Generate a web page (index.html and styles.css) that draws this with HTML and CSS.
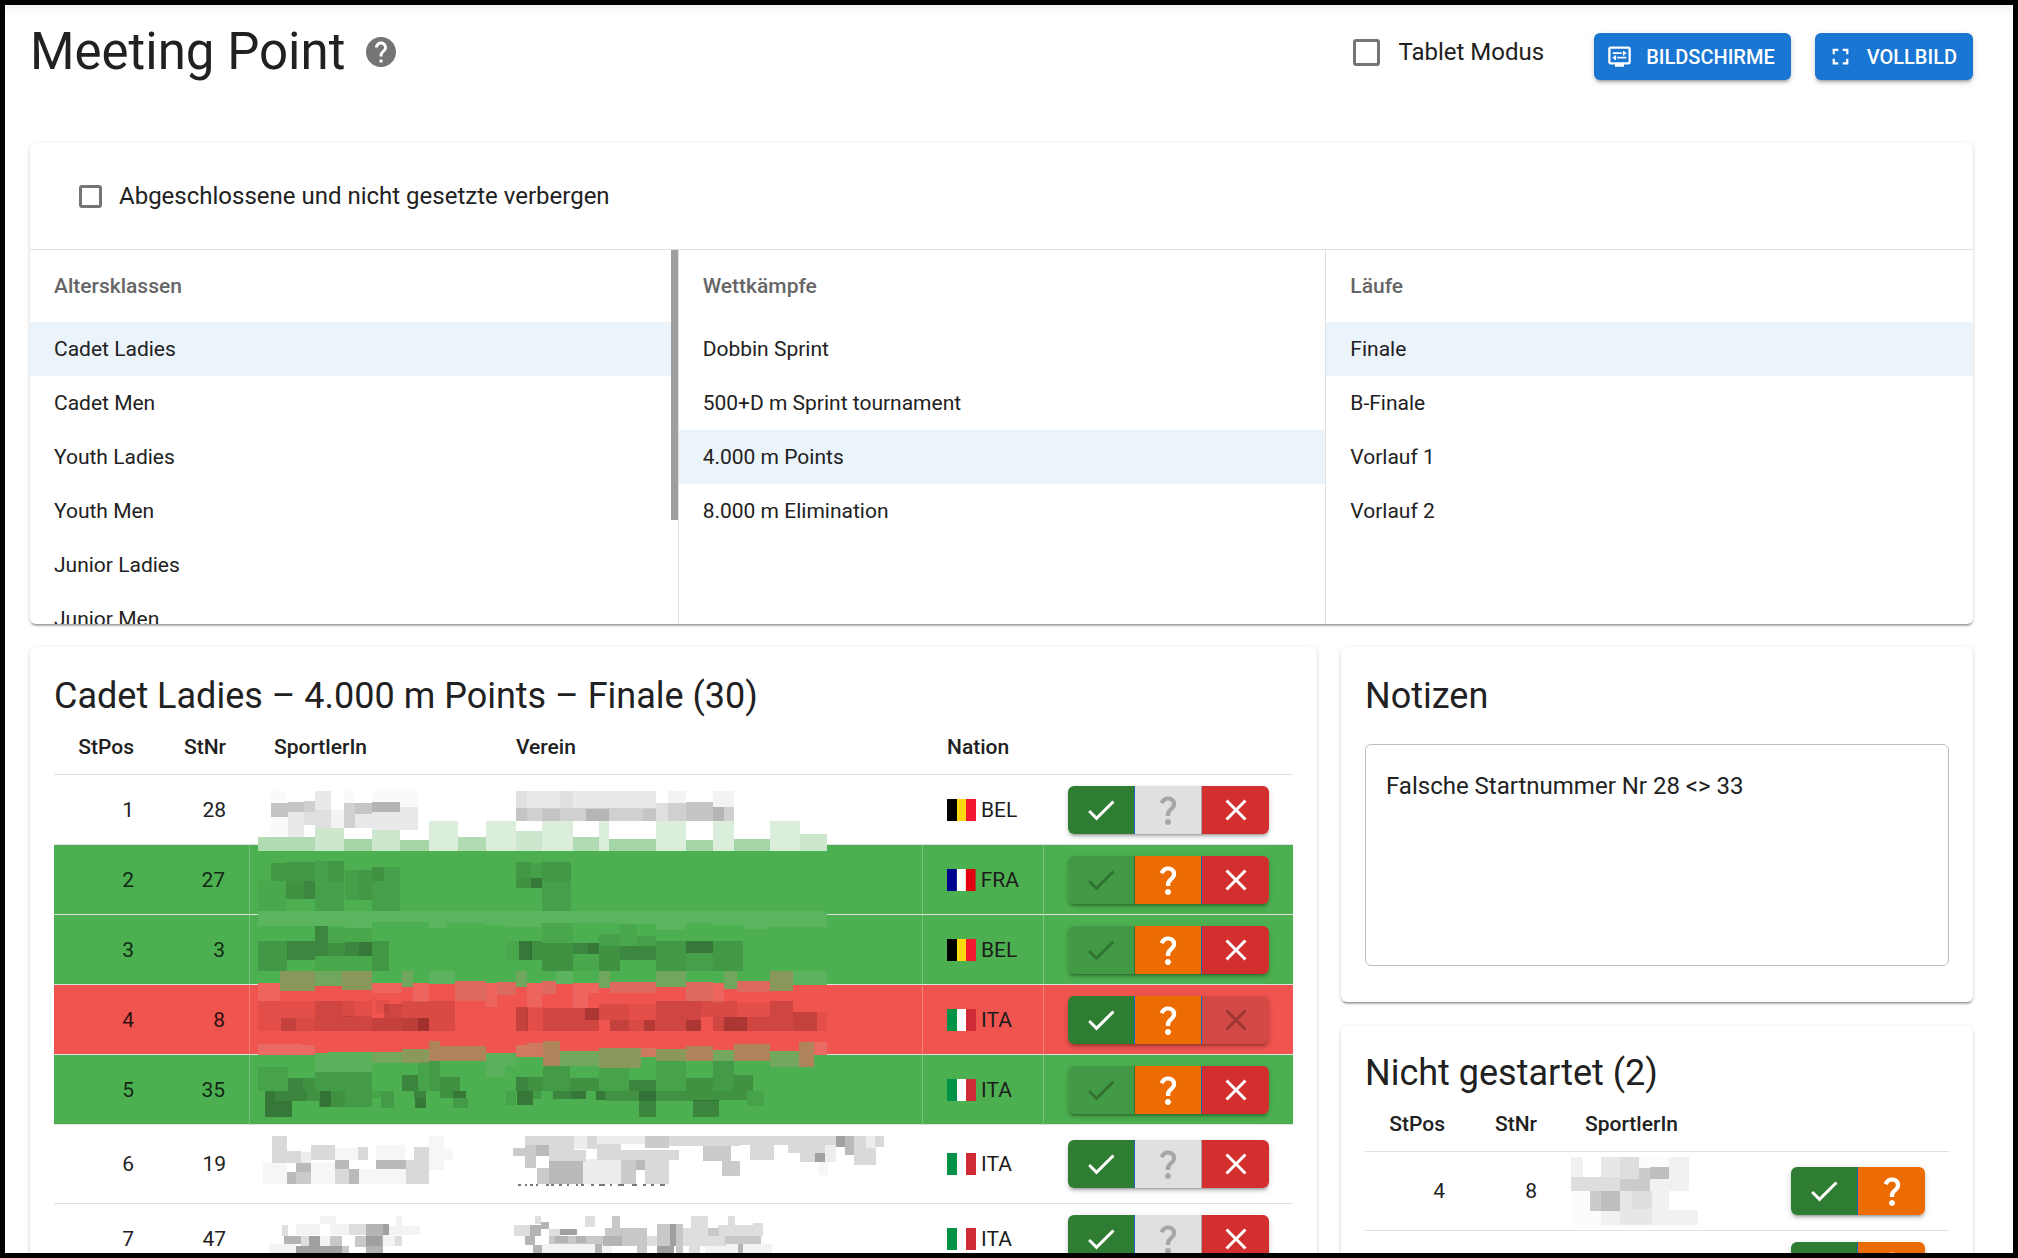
FILE: index.html
```html
<!DOCTYPE html>
<html lang="de">
<head>
<meta charset="utf-8">
<title>Meeting Point</title>
<link rel="stylesheet" href="styles.css">
</head>
<body>
<svg class="sprite" aria-hidden="true">
  <symbol id="i-check" viewBox="0 0 24 24"><path d="M9 16.17 4.83 12l-1.42 1.41L9 19 21 7l-1.41-1.41z"/></symbol>
  <symbol id="i-close" viewBox="0 0 24 24"><path d="M19 6.41 17.59 5 12 10.59 6.41 5 5 6.41 10.59 12 5 17.59 6.41 19 12 13.41 17.59 19 19 17.59 13.41 12z"/></symbol>
  <symbol id="i-ask" viewBox="0 0 24 24"><path d="M11.07 12.85c.77-1.39 2.25-2.21 3.11-3.44.91-1.29.4-3.7-2.18-3.7-1.69 0-2.52 1.28-2.87 2.34L6.54 6.96C7.25 4.83 9.18 3 11.99 3c2.35 0 3.96 1.07 4.78 2.41.7 1.15 1.11 3.3.03 4.9-1.2 1.77-2.35 2.31-2.97 3.45-.25.46-.35.76-.35 2.24h-2.89c-.01-.78-.13-2.05.48-3.15zM14 20c0 1.1-.9 2-2 2s-2-.9-2-2 .9-2 2-2 2 .9 2 2z"/></symbol>
  <symbol id="f-bel" viewBox="0 0 29 22"><path fill="#000" d="M0 0h10v22H0z"/><path fill="#ffd90c" d="M10 0h10v22H10z"/><path fill="#f31830" d="M19 0h10v22H19z"/></symbol>
  <symbol id="f-fra" viewBox="0 0 29 22"><path fill="#00008f" d="M0 0h10v22H0z"/><path fill="#fff" d="M10 0h10v22H10z"/><path fill="#e1000f" d="M19 0h10v22H19z"/></symbol>
  <symbol id="f-ita" viewBox="0 0 29 22"><path fill="#009246" d="M0 0h10v22H0z"/><path fill="#fff" d="M10 0h10v22H10z"/><path fill="#ce2b37" d="M19 0h10v22H19z"/></symbol>
</svg>
<div class="frame">
<main class="page">
  <header class="head">
    <h1 class="title">Meeting Point</h1>
    <svg class="help" viewBox="0 0 24 24" aria-hidden="true"><path d="M12 2C6.48 2 2 6.48 2 12s4.48 10 10 10 10-4.480 10-10S17.520 2 12 2zm1 17h-2v-2h2v2zm2.070-7.750-.9.920C13.450 12.900 13 13.500 13 15h-2v-.5c0-1.100.450-2.100 1.170-2.830l1.240-1.260c.370-.36.590-.86.590-1.410 0-1.100-.9-2-2-2s-2 .9-2 2H8c0-2.210 1.790-4 4-4s4 1.790 4 4c0 .88-.36 1.680-.93 2.250z"/></svg>
    <label class="check check-lg"><input type="checkbox"><span>Tablet Modus</span></label>
    <div class="tools">
      <button class="btn" type="button"><svg viewBox="0 0 24 24"><path d="M20 3H4c-1.110 0-2 .89-2 2v12c0 1.100.89 2 2 2h4v2h8v-2h4c1.100 0 2-.9 2-2V5c0-1.110-.9-2-2-2zm0 14H4V5h16v12z"/><path d="M6 8.250h8v1.500H6zM16.500 9.750H18v-1.500h-1.500V7H15v4h1.500zM10 12.250h8v1.500h-8zM7.500 15H9v-4H7.500v1.250H6v1.500h1.500z"/></svg>BILDSCHIRME</button>
      <button class="btn" type="button"><svg viewBox="0 0 24 24"><path d="M7 14H5v5h5v-2H7v-3zm-2-4h2V7h3V5H5v5zm12 7h-3v2h5v-5h-2v3zM14 5v2h3v3h2V5h-5z"/></svg>VOLLBILD</button>
    </div>
  </header>

  <section class="card picker">
    <div class="filter"><label class="check"><input type="checkbox"><span>Abgeschlossene und nicht gesetzte verbergen</span></label></div>
    <div class="lists">
      <div class="list">
        <h2 class="list-head">Altersklassen</h2>
        <ul>
          <li class="on">Cadet Ladies</li><li>Cadet Men</li><li>Youth Ladies</li><li>Youth Men</li><li>Junior Ladies</li><li>Junior Men</li>
        </ul>
        <span class="thumb"></span>
      </div>
      <div class="list">
        <h2 class="list-head">Wettkämpfe</h2>
        <ul><li>Dobbin Sprint</li><li>500+D m Sprint tournament</li><li class="on">4.000 m Points</li><li>8.000 m Elimination</li></ul>
      </div>
      <div class="list">
        <h2 class="list-head">Läufe</h2>
        <ul><li class="on">Finale</li><li>B-Finale</li><li>Vorlauf 1</li><li>Vorlauf 2</li></ul>
      </div>
    </div>
  </section>

  <div class="columns">
    <section class="card heat">
      <h2 class="card-title">Cadet Ladies – 4.000 m Points – Finale (30)</h2>
      <div class="table-wrap">
      <table>
        <colgroup><col class="c-pos"><col class="c-nr"><col class="c-name"><col><col class="c-nat"><col class="c-act3"></colgroup>
        <thead><tr><th class="num">StPos</th><th class="num">StNr</th><th>SportlerIn</th><th>Verein</th><th>Nation</th><th></th></tr></thead>
        <tbody>
          <tr><td class="num">1</td><td class="num">28</td><td></td><td></td><td><span class="nat"><svg><use href="#f-bel"/></svg>BEL</span></td><td><div class="group"><button class="ok" aria-label="Da"><svg><use href="#i-check"/></svg></button><button class="ask" aria-label="Offen" disabled><svg><use href="#i-ask"/></svg></button><button class="no" aria-label="Fehlt"><svg><use href="#i-close"/></svg></button></div></td></tr>
          <tr class="present"><td class="num">2</td><td class="num">27</td><td></td><td></td><td><span class="nat"><svg><use href="#f-fra"/></svg>FRA</span></td><td><div class="group"><button class="ok" aria-label="Da" disabled><svg><use href="#i-check"/></svg></button><button class="ask" aria-label="Offen"><svg><use href="#i-ask"/></svg></button><button class="no" aria-label="Fehlt"><svg><use href="#i-close"/></svg></button></div></td></tr>
          <tr class="present"><td class="num">3</td><td class="num">3</td><td></td><td></td><td><span class="nat"><svg><use href="#f-bel"/></svg>BEL</span></td><td><div class="group"><button class="ok" aria-label="Da" disabled><svg><use href="#i-check"/></svg></button><button class="ask" aria-label="Offen"><svg><use href="#i-ask"/></svg></button><button class="no" aria-label="Fehlt"><svg><use href="#i-close"/></svg></button></div></td></tr>
          <tr class="missing"><td class="num">4</td><td class="num">8</td><td></td><td></td><td><span class="nat"><svg><use href="#f-ita"/></svg>ITA</span></td><td><div class="group"><button class="ok" aria-label="Da"><svg><use href="#i-check"/></svg></button><button class="ask" aria-label="Offen"><svg><use href="#i-ask"/></svg></button><button class="no" aria-label="Fehlt" disabled><svg><use href="#i-close"/></svg></button></div></td></tr>
          <tr class="present"><td class="num">5</td><td class="num">35</td><td></td><td></td><td><span class="nat"><svg><use href="#f-ita"/></svg>ITA</span></td><td><div class="group"><button class="ok" aria-label="Da" disabled><svg><use href="#i-check"/></svg></button><button class="ask" aria-label="Offen"><svg><use href="#i-ask"/></svg></button><button class="no" aria-label="Fehlt"><svg><use href="#i-close"/></svg></button></div></td></tr>
          <tr class="tall"><td class="num">6</td><td class="num">19</td><td></td><td></td><td><span class="nat"><svg><use href="#f-ita"/></svg>ITA</span></td><td><div class="group"><button class="ok" aria-label="Da"><svg><use href="#i-check"/></svg></button><button class="ask" aria-label="Offen" disabled><svg><use href="#i-ask"/></svg></button><button class="no" aria-label="Fehlt"><svg><use href="#i-close"/></svg></button></div></td></tr>
          <tr><td class="num">7</td><td class="num">47</td><td></td><td></td><td><span class="nat"><svg><use href="#f-ita"/></svg>ITA</span></td><td><div class="group"><button class="ok" aria-label="Da"><svg><use href="#i-check"/></svg></button><button class="ask" aria-label="Offen" disabled><svg><use href="#i-ask"/></svg></button><button class="no" aria-label="Fehlt"><svg><use href="#i-close"/></svg></button></div></td></tr>
        </tbody>
      </table>
      <!-- names and clubs are pixelated; the blocks run across row borders -->
      <svg class="mosaic" viewBox="0 0 660 488" shape-rendering="crispEdges" aria-hidden="true">
        <svg width="640" height="250" viewBox="0 0 1568 750" preserveAspectRatio="none">
          <path fill="#fafafa" d="M75 63h41v36h-41zM75 141h43v60h-43zM254 63h28v36h-28zM323 63h113v48h-113z"/>
          <path fill="#f3f3f3" d="M224 120h30v54h-30zM1049 63h43v36h-43zM1158 63h52v48h-52z"/>
          <path fill="#e9e9e9" d="M118 126h38v75h-38zM183 63h41v57h-41zM282 132h41v42h-41zM323 126h68v54h-68zM391 111h45v69h-45zM703 63h315v54h-315z"/>
          <path fill="#e0e0e0" d="M675 63h28v51h-28zM785 63h30v54h-30zM156 126h27v39h-27zM183 120h41v54h-41zM1018 99h31v54h-31z"/>
          <path fill="#d0d0d0" d="M156 93h27v33h-27zM254 99h28v75h-28zM703 114h315v39h-315zM1049 99h43v54h-43zM1186 111h24v42h-24z"/>
          <path fill="#c5c5c5" d="M75 99h43v42h-43zM118 96h38v30h-38zM282 99h41v33h-41zM675 114h28v39h-28zM741 117h44v36h-44zM987 117h31v36h-31zM1092 96h66v57h-66z"/>
          <path fill="#b5b5b5" d="M323 96h68v30h-68zM848 117h56v36h-56zM1158 111h28v42h-28z"/>
          <path fill="#4db050" d="M43 225h1395v208H43zM43 423h1395v217H43z"/>
          <path fill="#b1dbb3" d="M43 201h140v42h-140zM533 201h70v42h-70zM815 201h65v42h-65z"/>
          <path fill="#a4d5a6" d="M254 207h69v36h-69zM391 210h72v33h-72zM904 207h114v36h-114zM1092 210h66v33h-66zM1210 207h88v36h-88z"/>
          <path fill="#dbeedc" d="M463 153h70v90h-70zM603 153h72v90h-72zM741 153h74v90h-74zM880 153h24v90h-24zM1018 153h74v90h-74zM1158 153h52v90h-52zM1298 153h74v90h-74z"/>
          <path fill="#cce7cd" d="M183 174h71v69h-71zM323 180h68v63h-68zM675 183h66v60h-66zM1372 192h66v51h-66z"/>
          <path fill="#5bb55f" d="M43 423h214v45h-214zM257 423h66v51h-66zM323 423h140v33h-140zM463 423h43v51h-43zM506 423h97v36h-97zM603 423h49v42h-49zM652 423h89v48h-89zM741 423h190v36h-190zM931 423h87v39h-87zM1018 423h74v57h-74zM1092 423h66v36h-66zM1158 423h74v42h-74zM1232 423h66v54h-66zM1298 423h140v48h-140z"/>
          <g fill="#234b25">
            <path opacity=".08" d="M43 333h70v90h-70zM741 459h74v60h-74zM183 558h140v45h-140zM652 514h32v57h-32zM815 552h65v51h-65zM215 474h42v45h-42zM257 474h66v42h-66zM931 462h42v66h-42z"/>
            <path opacity=".16" d="M183 273h32v60h-32zM183 333h73v90h-73zM257 300h35v90h-35zM323 333h70v90h-70zM354 291h39v42h-39zM712 279h29v45h-29zM741 333h71v90h-71zM880 492h51v36h-51zM973 499h45v30h-45zM1092 549h67v54h-67z"/>
            <path opacity=".23" d="M75 279h38v54h-38zM113 276h70v57h-70zM215 273h41v60h-41zM292 300h31v90h-31zM675 276h37v48h-37zM741 276h71v57h-71zM43 514h71v89h-71zM323 514h41v89h-41zM1018 514h74v89h-74zM1159 514h73v89h-73z"/>
            <path opacity=".3" d="M113 333h43v54h-43zM323 291h31v42h-31zM675 324h37v30h-37zM215 519h42v39h-42zM712 514h29v57h-29zM741 519h74v84h-74zM880 528h51v75h-51z"/>
            <path opacity=".4" d="M156 333h27v54h-27zM183 468h32v90h-32zM114 514h69v57h-69zM257 516h35v42h-35zM815 519h37v33h-37zM931 528h87v42h-87z"/>
            <path opacity=".55" d="M712 324h29v30h-29zM292 516h31v42h-31zM684 514h31v57h-31zM852 519h28v33h-28zM1092 514h67v35h-67z"/>
          </g>
          <path fill="#f0544f" d="M43 640h1395v80h-1395z"/>
          <path fill="#8a975a" d="M99 603h84v60h-84zM249 603h74v57h-74zM1298 603h57v60h-57z"/>
          <path fill="#70a65d" d="M183 603h66v45h-66zM397 603h28v48h-28zM675 603h28v48h-28zM880 603h26v51h-26zM1018 603h74v48h-74zM1186 603h31v54h-31z"/>
          <path fill="#5bb360" d="M463 603h63v39h-63zM774 603h41v39h-41zM1355 603h83v42h-83z"/>
          <path fill="#ee655f" d="M43 640h56v54h-56zM323 640h74v29h-74zM425 640h38v56h-38zM603 640h26v71h-26zM703 640h38v71h-38zM815 640h37v74h-37zM852 640h28v29h-28zM1159 640h27v59h-27z"/>
          <path fill="#dd6a5e" d="M526 634h77v60h-77zM629 636h46v39h-46zM741 634h33v38h-33zM906 636h112v33h-112zM1092 636h67v58h-67zM1217 634h81v32h-81z"/>
        </svg>
        <svg y="230" width="660" height="258" viewBox="0 0 1568 774" preserveAspectRatio="none">
          <g fill="#551111">
            <path opacity=".08" d="M43 4h54v90h-54zM97 4h80v51h-80zM274 4h39v45h-39zM323-18h31v58h-31zM682 24h37v70h-37zM1180 10h79v42h-79zM1370 36h24v58h-24zM925 13h64v48h-64z"/>
            <path opacity=".14" d="M242 4h32v46h-32zM385 4h125v90h-125zM853 13h72v46h-72zM1095 4h85v48h-85zM133 55h44v39h-44zM925 61h64v33h-64z"/>
            <path opacity=".22" d="M177 4h65v90h-65zM341 13h44v42h-44zM719 24h134v70h-134zM989 4h106v90h-106zM1259 4h54v90h-54zM1124 52h135v42h-135zM242 49h71v45h-71zM385 55h63v39h-63z"/>
            <path opacity=".28" d="M97 55h35v39h-35zM313 55h72v39h-72zM424 55h24v39h-24zM656 22h28v72h-28zM820 24h33v35h-33zM879 59h44v35h-44zM960 61h27v33h-27zM1060 61h35v33h-35zM1150 52h54v42h-54zM1313 37h57v57h-57z"/>
          </g>
          <path fill="#4db050" d="M43 159h1352v16h-1352z"/>
          <path fill="#e96a63" d="M43 133h102v32h-102zM145 136h32v29h-32zM1363 127h32v38h-32z"/>
          <path fill="#cd7a60" d="M656 136h25v35h-25zM681 130h38v41h-38zM953 143h35v28h-35z"/>
          <path fill="#5bb05b" d="M177 160h31v55h-31zM208 156h105v60h-105zM584 159h46v71h-46zM630 159h25v40h-25z"/>
          <path fill="#74a75e" d="M313 156h72v33h-72zM760 153h93v45h-93zM1124 150h50v33h-50zM1259 153h70v48h-70z"/>
          <path fill="#8a985b" d="M385 148h64v41h-64zM853 144h100v60h-100zM988 148h72v35h-72z"/>
          <path fill="#af845a" d="M449 124h25v59h-25zM474 138h110v45h-110zM719 124h41v74h-41zM1060 138h64v45h-64zM1174 133h85v50h-85zM1329 127h34v74h-34z"/>
          <g fill="#234b25">
            <path opacity=".12" d="M43 201h70v73h-70zM424 187h25v87h-25zM313 274h22v20h-22zM631 274h25v42h-25zM1204 274h40v44h-40zM988 183h72v91h-72zM853 204h72v70h-72z"/>
            <path opacity=".2" d="M177 216h136v58h-136zM449 183h25v91h-25zM335 274h32v50h-32zM250 274h63v48h-63zM719 198h66v76h-66zM1124 183h50v91h-50zM506 294h36v31h-36zM696 274h20v24h-20z"/>
            <path opacity=".3" d="M150 235h27v39h-27zM158 274h92v30h-92zM188 304h62v18h-62zM474 231h48v43h-48zM474 274h32v20h-32zM684 231h35v43h-35zM785 235h68v39h-68zM866 274h274v28h-274zM1060 235h64v39h-64zM1174 225h45v49h-45zM1140 274h64v26h-64z"/>
            <path opacity=".42" d="M113 235h37v39h-37zM83 274h75v30h-75zM189 274h28v47h-28zM385 225h39v49h-39zM413 274h28v20h-28zM656 231h28v43h-28zM924 241h64v33h-64zM949 274h39v78h-39zM1076 300h63v52h-63zM743 274h43v24h-43z"/>
            <path opacity=".55" d="M59 274h24v78h-24zM83 304h40v48h-40zM416 294h25v31h-25zM506 274h30v21h-30zM659 274h37v42h-37zM786 274h35v24h-35zM846 274h20v26h-20z"/>
          </g>
          <path fill="#f6f6f6" d="M54 490h57v62h-57zM225 445h56v36h-56zM323 436h70v45h-70zM168 490h57v62h-57zM281 508h113v44h-113zM450 409h34v102h-34zM484 448h23v32h-23zM1376 487h20v39h-20z"/>
          <path fill="#ededed" d="M794 409h30v38h-30zM848 409h114v24h-114zM146 457h22v33h-22zM815 476h90v76h-90zM1487 409h22v35h-22zM1391 436h24v51h-24z"/>
          <path fill="#d9d9d9" d="M77 409h34v80h-34zM111 454h35v36h-35zM168 436h57v45h-57zM281 442h22v38h-22zM225 508h35v44h-35zM413 442h37v110h-37zM394 481h56v71h-56zM677 409h117v40h-117zM735 449h88v36h-88zM824 409h24v38h-24zM848 433h57v47h-57zM905 450h137v30h-137zM962 480h57v72h-57zM1019 409h170v30h-170zM1189 409h226v26h-226zM1212 435h57v45h-57zM1302 435h89v25h-89zM1330 460h61v26h-61zM1459 409h28v86h-28zM1487 444h23v51h-23zM1509 409h21v32h-21z"/>
          <path fill="#cbcbcb" d="M134 515h34v37h-34zM649 444h28v24h-28zM677 436h26v69h-26zM706 505h30v47h-30zM905 480h35v72h-35zM962 409h57v35h-57zM1100 439h66v44h-66zM1146 483h43v46h-43z"/>
          <path fill="#bababa" d="M111 517h23v35h-23zM134 490h34v25h-34zM225 481h35v27h-35zM260 508h22v44h-22zM323 481h71v27h-71zM703 436h32v32h-32zM735 484h80v68h-80zM940 480h22v30h-22zM1437 409h22v56h-22z"/>
          <path fill="#a2a2a2" d="M1366 459h24v28h-24zM1415 409h22v32h-22z"/>
          <path fill="#777" d="M660 552h7v5h-7zM676 552h6v5h-6zM690 552h6v5h-6zM703 552h6v5h-6zM728 552h6v5h-6zM739 552h6v5h-6zM759 552h6v5h-6zM776 552h6v5h-6zM798 552h6v5h-6zM811 552h6v5h-6zM835 552h6v5h-6zM853 552h13v5h-13zM879 552h5v5h-5zM899 552h13v5h-13zM931 552h12v5h-12zM958 552h6v5h-6zM977 552h6v5h-6zM997 552h13v5h-13z"/>
          <path fill="#f3f3f3" d="M68 733h65v41h-65zM191 649h38v22h-38zM133 671h58v34h-58zM215 671h84v34h-84zM355 679h73v26h-73zM371 649h13v30h-13zM189 707h26v32h-26zM340 705h28v34h-28zM717 731h126v43h-126zM859 731h25v43h-25zM1105 731h158v43h-158z"/>
          <path fill="#dedede" d="M99 675h16v32h-16zM146 707h19v32h-19zM368 707h16v32h-16zM651 675h38v32h-38zM701 649h15v22h-15zM820 649h23v33h-23zM733 688h27v19h-27zM1071 649h42v36h-42zM1159 649h18v26h-18zM1136 675h82v32h-82zM1218 668h24v39h-24zM1052 685h62v54h-62zM1070 707h85v32h-85zM1067 739h25v35h-25zM967 707h24v32h-24zM259 671h40v34h-40z"/>
          <path fill="#c8c8c8" d="M215 707h27v32h-27zM242 739h17v35h-17zM273 707h26v33h-26zM884 649h19v37h-19zM866 683h101v56h-101zM822 707h44v24h-44zM733 707h89v24h-89zM991 671h30v68h-30zM1036 671h16v90h-16zM1113 685h24v22h-24zM1152 707h67v25h-67zM943 739h24v20h-24zM1219 707h18v25h-18z"/>
          <path fill="#b4b4b4" d="M105 707h41v26h-41zM299 673h41v86h-41zM689 675h27v32h-27zM716 667h17v20h-17zM677 707h24v29h-24zM696 736h21v38h-21zM748 707h32v22h-32zM798 707h24v22h-24zM862 707h45v30h-45zM843 731h17v43h-17zM1183 732h13v42h-13z"/>
          <path fill="#a0a0a0" d="M133 739h109v35h-109zM165 707h24v32h-24zM340 673h15v32h-15zM299 707h38v32h-38zM760 688h40v18h-40zM1021 671h15v68h-15zM991 737h39v37h-39z"/>
        </svg>
      </svg>
      </div>
    </section>

    <div class="side">
      <section class="card notes">
        <h2 class="card-title"><label for="notes">Notizen</label></h2>
        <textarea id="notes">Falsche Startnummer Nr 28 &lt;&gt; 33</textarea>
      </section>
      <section class="card absent">
        <h2 class="card-title">Nicht gestartet (2)</h2>
        <table>
          <colgroup><col class="c-pos"><col class="c-nr"><col><col class="c-act2"></colgroup>
          <thead><tr><th class="num">StPos</th><th class="num">StNr</th><th>SportlerIn</th><th></th></tr></thead>
          <tbody>
            <tr class="tall"><td class="num">4</td><td class="num">8</td><td class="blur"><svg viewBox="0 0 284 204" preserveAspectRatio="none" shape-rendering="crispEdges" aria-hidden="true"><path fill="#fcfcfc" d="M0 101h67v103H0zM152 0h67v34h-67z"/><path fill="#f1f1f1" d="M0 0h27v60H0zM219 0h45v101h-45zM177 65h42v36h-42zM67 155h43v49H67zM182 101h37v58h-37zM182 159h102v45H182z"/><path fill="#e7e7e7" d="M67 0h42v60H67zM110 101h30v103h-30zM140 155h42v49h-42z"/><path fill="#dedede" d="M110 0h42v65h-42zM0 60h110v41H0zM137 101h45v54h-45z"/><path fill="#cbcbcb" d="M152 34h25v67h-67V65h42zM42 101h25v60H42z"/><path fill="#bebebe" d="M177 31h42v34h-42zM67 101h43v60H67z"/></svg></td><td><div class="group"><button class="ok" aria-label="Da"><svg><use href="#i-check"/></svg></button><button class="ask" aria-label="Offen"><svg><use href="#i-ask"/></svg></button></div></td></tr>
            <tr><td></td><td></td><td></td><td><div class="group"><button class="ok" aria-label="Da"><svg><use href="#i-check"/></svg></button><button class="ask" aria-label="Offen"><svg><use href="#i-ask"/></svg></button></div></td></tr>
          </tbody>
        </table>
      </section>
    </div>
  </div>
</main>
</div>
</body>
</html>
```
FILE: styles.css
```css
* { box-sizing: border-box; }

body {
  margin: 0;
  font-family: Roboto, "Liberation Sans", sans-serif;
  font-size: 21px;
  line-height: 30px;
  color: #212121;
  background: #fff;
}

h1, h2, ul { margin: 0; padding: 0; font-weight: 400; }
button, textarea { font: inherit; }

.sprite { position: absolute; width: 0; height: 0; }

.frame {
  height: 100vh;
  overflow: hidden;
  border: 5px solid #000;
  background: linear-gradient(#f4f4f4, #fff 12px);
}

.page { padding: 17px 40px 0 25px; }

/* header */
.head { display: flex; align-items: flex-start; margin-bottom: 61px; }
.title { font-size: 51px; line-height: 60px; }
.help { width: 36px; height: 36px; margin: 12px 0 0 18px; fill: #757575; }

.check { display: flex; align-items: center; gap: 17px; font-size: 24px; line-height: 36px; }
.check input {
  appearance: none;
  flex: none;
  width: 23px;
  height: 23px;
  margin: 0;
  border: 3px solid #757575;
  border-radius: 3px;
  background: #fff;
}
.check-lg { height: 60px; margin-left: auto; gap: 18px; }
.check-lg input { width: 27px; height: 27px; }

.tools { display: flex; gap: 24px; padding-top: 11px; margin-left: 50px; }
.btn {
  display: flex;
  align-items: center;
  gap: 13px;
  height: 47px;
  padding: 0 16px 0 12px;
  border: 0;
  border-radius: 6px;
  color: #fff;
  background: #1976d2;
  font-size: 20px;
  font-weight: 500;
  box-shadow: 0 4px 2px -3px rgba(0, 0, 0, .2), 0 3px 3px rgba(0, 0, 0, .14), 0 2px 7px rgba(0, 0, 0, .12);
}
.btn svg { width: 27px; height: 27px; fill: currentColor; }

/* cards */
.card {
  border-radius: 6px;
  background: #fff;
  box-shadow: 0 3px 2px -2px rgba(0, 0, 0, .3), 0 2px 2px rgba(0, 0, 0, .14), 0 1px 5px rgba(0, 0, 0, .12);
}
.card-title { font-size: 36px; line-height: 48px; }

/* selection lists */
.picker { overflow: hidden; margin-bottom: 23px; }
.filter { padding: 35px 49px; border-bottom: 1px solid #e0e0e0; }
.lists { display: grid; grid-template-columns: repeat(3, 1fr); height: 374px; }
.list { position: relative; overflow: hidden; }
.list + .list { border-left: 1px solid #e0e0e0; }
.list-head {
  padding: 21px 24px;
  font-size: 21px;
  line-height: 30px;
  font-weight: 500;
  color: #666;
}
.list ul { list-style: none; }
.list li { padding: 12px 24px; }
.list .on { background: #ebf3fb; }
.thumb { position: absolute; top: 0; right: 0; width: 7px; height: 270px; background: #9e9e9e; }

/* lower part */
.columns { display: grid; grid-template-columns: minmax(0, 1287fr) minmax(0, 632fr); gap: 24px; align-items: start; }
.side { display: grid; gap: 24px; }
.heat, .notes { padding: 25px 24px 24px; }
.absent { padding: 23px 24px; }

table { width: 100%; table-layout: fixed; border-collapse: separate; border-spacing: 0; }
.c-pos { width: 104px; }
.c-nr { width: 92px; }
.c-name { width: 242px; }
.c-nat { width: 121px; }
.c-act3 { width: 249px; }
.c-act2 { width: 182px; }
th, td { padding: 0 24px; text-align: left; border-bottom: 1px solid #e0e0e0; }
th { height: 55px; font-weight: 500; }
td { height: 70px; }
.tall td { height: 79px; }
.num { text-align: right; }

.present { color: #122916; background: #4db050; }
.missing { color: #2f1110; background: #f0544f; }
.present .num:nth-child(2), .present td:nth-child(4), .present td:nth-child(5),
.missing .num:nth-child(2), .missing td:nth-child(4), .missing td:nth-child(5) {
  border-right: 1px solid rgba(255, 255, 255, .25);
}

.nat { display: flex; align-items: center; gap: 5px; }
.nat svg { width: 29px; height: 22px; }
tr .nat { color: #1c1c1c; }

.group {
  display: flex;
  width: max-content;
  border-radius: 6px;
  box-shadow: 0 4px 2px -3px rgba(0, 0, 0, .2), 0 3px 3px rgba(0, 0, 0, .14), 0 2px 7px rgba(0, 0, 0, .12);
}
.group button {
  display: flex;
  align-items: center;
  justify-content: center;
  width: 67px;
  height: 48px;
  padding: 0;
  border: 0;
  color: #fff;
}
.group svg { width: 36px; height: 36px; fill: currentColor; }
.group button:first-child { border-radius: 6px 0 0 6px; }
.group button:last-child { border-radius: 0 6px 6px 0; }
.group button:not(:last-child) { border-right: 1px solid #1565c0; }
.group .ok { background: #2e7d32; }
.group .ask { background: #ed6c02; }
.group .no { background: #d32f2f; }
.group button:disabled { color: rgba(0, 0, 0, .26); background: rgba(0, 0, 0, .12); border-color: rgba(0, 0, 0, .26); }

/* pixelated personal data lying over the name and club cells */
.table-wrap { position: relative; }
.mosaic { position: absolute; top: 50px; left: 186px; width: 660px; height: 488px; pointer-events: none; }
.blur { padding: 0 10px; }
.blur svg { display: block; width: 127px; height: 68px; }

.notes textarea {
  display: block;
  width: 100%;
  height: 222px;
  margin-top: 24px;
  margin-bottom: 12px;
  padding: 23px 20px;
  border: 1px solid #bdbdbd;
  border-radius: 6px;
  outline: 0;
  resize: none;
  color: inherit;
  background: #fff;
  font-size: 24px;
  line-height: 36px;
}
```
